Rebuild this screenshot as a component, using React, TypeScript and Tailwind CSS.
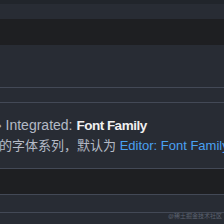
export default function App() {
  return (
    <div
      className="flex h-[224px] w-[224px] flex-col overflow-hidden bg-[#282c34] text-[13px]"
      style={{ fontFamily: '"Liberation Sans", "Noto Sans CJK SC", sans-serif' }}
    >
      <div className="h-[4px] shrink-0 bg-[#21252b]" />
      <div className="h-[15px] shrink-0" />
      <div className="h-[26px] shrink-0 bg-[#1e1f22]" />
      <div className="h-[42px] shrink-0" />
      <div className="h-[15px] shrink-0 border-t border-[#434956]" />
      <div className="shrink-0 border-t border-[#434956]">
        <div className="ml-[-3px] whitespace-nowrap pt-[13px] text-[14px] leading-[18px]">
          <span className="text-[#b4bac6]">› Integrated: </span>
          <span className="text-[13.5px] font-bold tracking-[-0.5px] text-[#f0f0f0]">Font Family</span>
        </div>
        <div className="ml-[-1px] mt-[2px] whitespace-nowrap leading-[18px] text-[#b4bac6]">
          的字体系列，默认为 <span className="text-[#4aa1f2]">Editor: Font Family</span>
        </div>
        <div className="h-[13px]" />
      </div>
      <div className="h-[26px] shrink-0 border-t border-[#434956] bg-[#1e1f22]" />
      <div className="h-[18px] shrink-0 border-t border-[#434956]" />
      <div className="relative flex-1 border-t border-[#434956]">
        <span className="absolute bottom-[3px] right-[2px] whitespace-nowrap text-[6px] text-[#5c6370]">
          @稀土掘金技术社区
        </span>
      </div>
    </div>
  );
}
